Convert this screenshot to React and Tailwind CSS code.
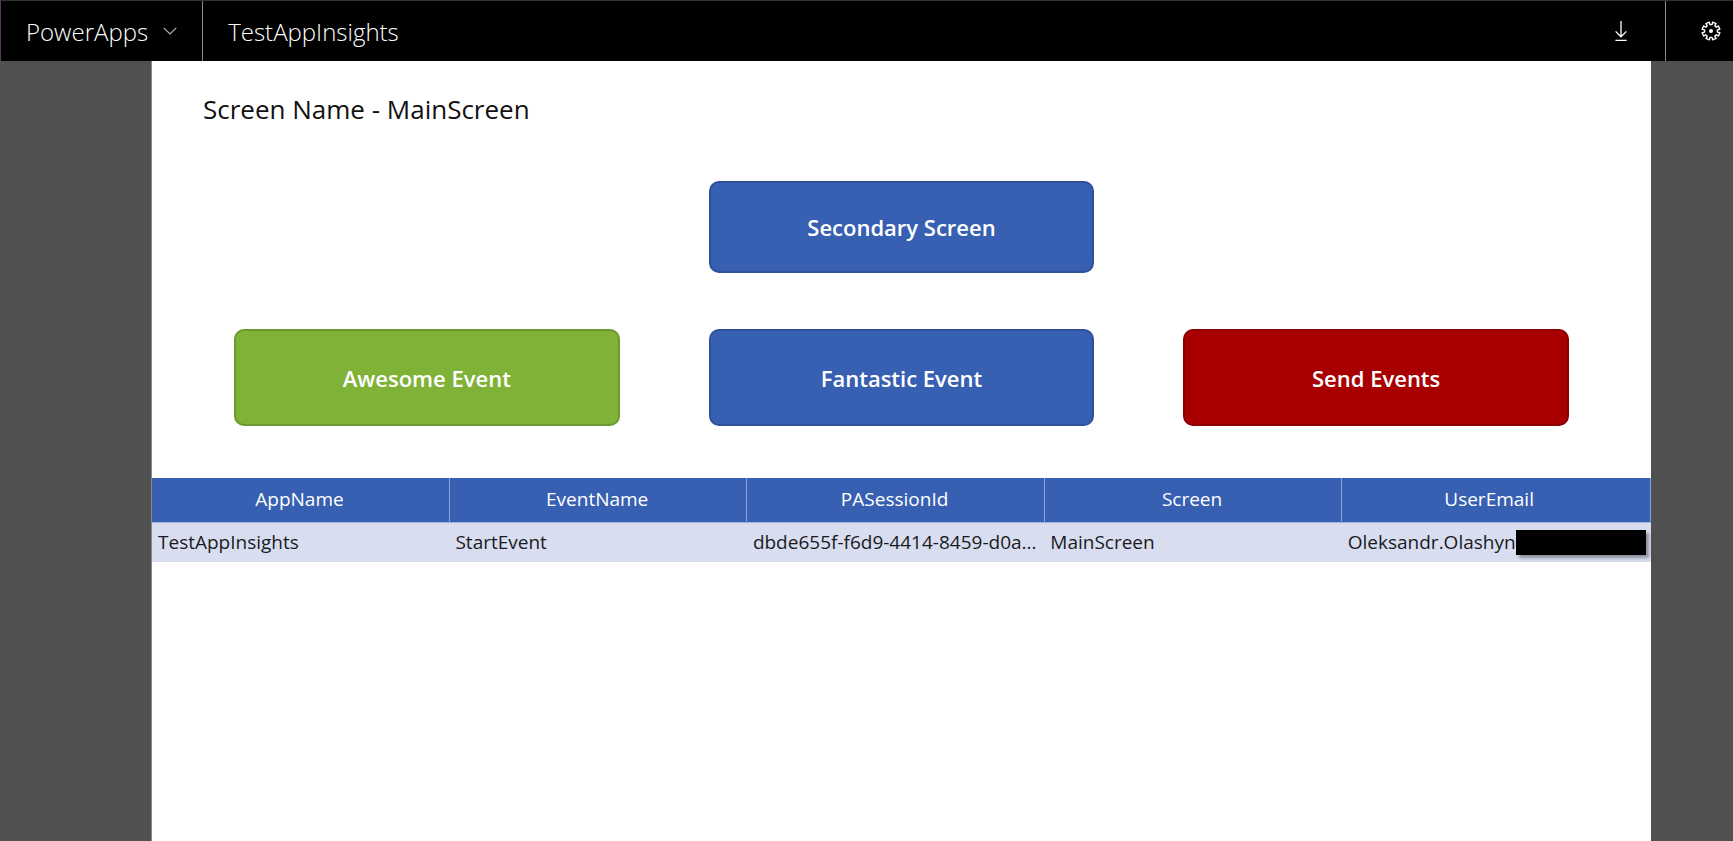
import { clsx } from "clsx";

const columns = ["AppName", "EventName", "PASessionId", "Screen", "UserEmail"];

const rows = [
  {
    appName: "TestAppInsights",
    eventName: "StartEvent",
    sessionId: "dbde655f-f6d9-4414-8459-d0a...",
    screen: "MainScreen",
    email: "Oleksandr.Olashyn",
  },
];

function ChevronDown() {
  return (
    <svg className="h-2 w-3.5" viewBox="0 0 14 8" fill="none" stroke="#b8b8b8" strokeWidth="1.1" aria-hidden="true">
      <path d="M0.7 0.8 7 7 13.3 0.8" />
    </svg>
  );
}

function DownloadIcon() {
  return (
    <svg className="h-5 w-3" viewBox="0 0 12 20" fill="none" stroke="#fff" strokeWidth="1.3" aria-hidden="true">
      <path d="M6 0V16M0.6 10.4 6 15.8 11.4 10.4M0.4 19.3H11.6" />
    </svg>
  );
}

const gearPath = (() => {
  const teeth = 8;
  const points = [];
  const at = (radius, degrees) => {
    const a = (degrees * Math.PI) / 180;
    points.push(`${(radius * Math.cos(a)).toFixed(2)} ${(radius * Math.sin(a)).toFixed(2)}`);
  };
  for (let i = 0; i < teeth; i += 1) {
    const mid = (360 / teeth) * (i + 0.5);
    at(6.5, mid - 13);
    at(9, mid - 12);
    at(9, mid + 12);
    at(6.5, mid + 13);
  }
  return `M${points.join("L")}Z`;
})();

// Ring with eight rounded square teeth around a solid hub.
function GearIcon() {
  return (
    <svg className="size-5" viewBox="-10 -10 20 20" fill="none" stroke="#fff" strokeWidth="1.4" strokeLinejoin="round" aria-hidden="true">
      <path d={gearPath} />
      <circle r="2" fill="#fff" stroke="none" />
    </svg>
  );
}

function ActionButton({ className, children }) {
  return (
    <button
      type="button"
      className={clsx(
        "w-full rounded-[10px] border-2 text-[22px] leading-8 font-semibold text-white",
        className,
      )}
    >
      {children}
    </button>
  );
}

function Header() {
  return (
    <header className="flex h-[61px] items-stretch border-t border-l border-t-[#333] border-l-[#5c3560] bg-black text-white">
      <button type="button" className="flex items-center gap-[15px] border-r border-[#8a8a8a] pr-[25px] pl-[25px]">
        <span className="pt-0.5 text-2xl font-light">PowerApps</span>
        <ChevronDown />
      </button>
      <h1 className="flex items-center pt-0.5 pl-[25px] text-2xl font-light">TestAppInsights</h1>
      <div className="ml-auto flex">
        <button type="button" aria-label="Download" className="flex w-[88px] items-center justify-center">
          <DownloadIcon />
        </button>
        <button
          type="button"
          aria-label="Settings"
          className="flex w-[68px] items-center justify-end border-l border-[#8a8a8a] pr-3"
        >
          <GearIcon />
        </button>
      </div>
    </header>
  );
}

function EventsTable() {
  return (
    <table className="mt-[52px] w-full table-fixed border-collapse text-[19px] leading-7">
      <colgroup>
        <col className="w-[19.85%]" />
        <col className="w-[19.85%]" />
        <col className="w-[19.85%]" />
        <col className="w-[19.85%]" />
        <col />
      </colgroup>
      <thead>
        <tr className="h-11 border-b border-[#a3b5df] bg-[#3860b2] text-white">
          {columns.map((name) => (
            <th key={name} scope="col" className="border-r border-[#8ba3d6] pt-0 pr-0.5 pb-0.5 pl-0 font-medium last:pr-3.5">
              {name}
            </th>
          ))}
        </tr>
      </thead>
      <tbody>
        {rows.map((row) => (
          <tr key={row.sessionId} className="h-10 bg-[#d8def0] text-[#1a1a22]">
            <td className="py-0 pr-0 pl-1.5">{row.appName}</td>
            <td className="py-0 pr-0 pl-1.5">{row.eventName}</td>
            <td className="py-0 pr-0 pl-1.5 whitespace-nowrap">{row.sessionId}</td>
            <td className="py-0 pr-0 pl-1.5">{row.screen}</td>
            <td className="py-0 pr-[5px] pl-1.5">
              <div className="flex items-center">
                <span>{row.email}</span>
                <span className="h-[25px] flex-1 bg-black shadow-[3px_3px_3px_rgba(0,0,0,0.35)]" />
              </div>
            </td>
          </tr>
        ))}
      </tbody>
    </table>
  );
}

export default function App() {
  return (
    <div className="flex min-h-screen flex-col bg-[#505050] font-['Open_Sans','Noto_Sans',sans-serif]">
      <Header />
      <main className="mr-[82px] ml-[151px] flex-1 border-l border-[#8a8a8a] bg-white">
        <h2 className="pt-[30px] pl-[51px] text-[26px] leading-9 text-[#111]">Screen Name - MainScreen</h2>
        <div className="mt-[54px] grid grid-cols-3 gap-x-[89px] gap-y-14 px-[82px]">
          <ActionButton className="col-start-2 h-[92px] border-[#2f519b] bg-[#3860b2]">Secondary Screen</ActionButton>
          <ActionButton className="col-start-1 h-[97px] border-[#6b992f] bg-[#80b238]">Awesome Event</ActionButton>
          <ActionButton className="h-[97px] border-[#2f519b] bg-[#3860b2]">Fantastic Event</ActionButton>
          <ActionButton className="h-[97px] border-[#8b0000] bg-[#a80000]">Send Events</ActionButton>
        </div>
        <EventsTable />
      </main>
    </div>
  );
}
